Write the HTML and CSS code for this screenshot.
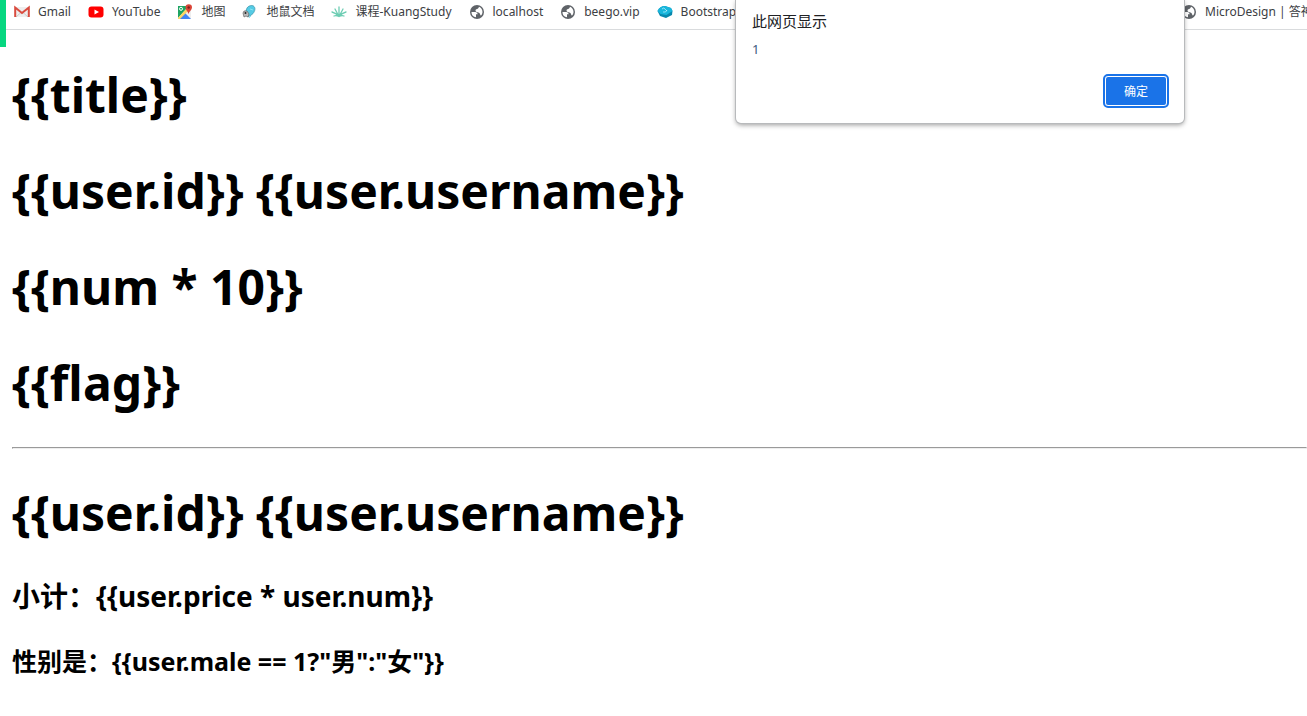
FILE: index.html
```html
<!DOCTYPE html>
<html lang="zh-CN">
<head>
<meta charset="utf-8">
<title>Vue</title>
<link rel="stylesheet" href="styles.css">
</head>
<body>
<svg class="defs" aria-hidden="true">
  <symbol id="globe" viewBox="0 0 16 16">
    <circle cx="8" cy="8" r="7" fill="#5f6368"/>
    <path d="M2.500 8H6.500Q8.700 8.300 8.700 10.200H7V13.300C4.500 13 2.400 11 2.500 8ZM10 2.800C12 3.500 13.500 5.500 13.500 8 13.500 9 13 10.500 12 11.500 11 11.500 11.500 9.500 10 8.700 8.500 8.200 6.500 8 6.500 6.500 6.500 5 9.500 5.500 10 2.800Z" fill="#fff"/>
  </symbol>
</svg>
<div class="page">
  <div class="accent"></div>
  <nav class="bookmarks">
    <a href="#"><svg class="icon" viewBox="0 0 16 16"><path d="M1 3h14v10H1z" fill="#eee"/><path d="M2 13 7 8.500M14 13 9 8.500" stroke="#ccc"/><path d="M1.200 13V3.500L8 9l6.800-5.500V13" fill="none" stroke="#d94b3f" stroke-width="2"/></svg><span>Gmail</span></a>
    <a href="#"><svg class="icon" viewBox="0 0 16 16"><rect x=".5" y="2.500" width="15" height="11" rx="3" fill="#f00"/><path d="M6.500 5.500v5L11 8z" fill="#fff"/></svg><span>YouTube</span></a>
    <a href="#"><svg class="icon" viewBox="0 0 16 16"><path d="M1 2h13v13H1z" fill="#eee"/><path d="M1 2h11L1 14z" fill="#1fa463"/><path d="M2 15 8 9l6 6z" fill="#4285f4"/><path d="m1 14 8-9 2 2-8 8H1z" fill="#fdd663"/><circle cx="4" cy="4.800" r="1.500" fill="none" stroke="#fff"/><path d="M11.500 10C11 7.500 8.500 6 8.500 3.500a3 3 0 0 1 6.500 0C15 6 12 7.500 11.500 10z" fill="#db4437"/><circle cx="11.700" cy="3.500" r="1.200" fill="#7b231c"/></svg><span>地图</span></a>
    <a href="#"><svg class="icon" viewBox="0 0 16 16"><path d="M5 4C7 1 11 1 12 2.500c2 2 .500 6-2 8L6 13 3 9z" fill="#54cbe5" stroke="#3b93a8" stroke-width=".7"/><path d="M2 7l3 0 2 3-1 3-2-1-2 1-1-4z" fill="#bbb" stroke="#666" stroke-width=".7"/><circle cx="3.500" cy="9" r="1" fill="#222"/><path d="M9 12 7 14M8 5l3 1" stroke="#8ce4f4"/></svg><span>地鼠文档</span></a>
    <a href="#"><svg class="icon" viewBox="0 0 16 16"><path d="M8 12.500V3M8 12.500 4 5M8 12.500 12 5M8 12.500Q5 9 1 8M8 12.500Q11 9 15 8M8 12.500Q5 11 3 12M8 12.500Q11 11 13 12" fill="none" stroke="#6dcdb3" stroke-width="1.300" stroke-linecap="round"/></svg><span>课程-KuangStudy</span></a>
    <a href="#"><svg class="icon"><use href="#globe"/></svg><span>localhost</span></a>
    <a href="#"><svg class="icon"><use href="#globe"/></svg><span>beego.vip</span></a>
    <a href="#"><svg class="icon" viewBox="0 0 16 16"><path d="M.500 7Q3 2 8 2l6 2 1.500 3-.500 4-6 3-6-2z" fill="#0788ad"/><path d="M.500 7Q3 2 8 2l6 2 1.500 3-6 4-6-1z" fill="#18b6dc"/><path d="M5 5q2-2 3 0l2 2M6 8q3 1 4-2" fill="none" stroke="#c6f4ff" stroke-width=".7"/></svg><span>Bootstrap</span></a>
    <a href="#" class="last"><svg class="icon"><use href="#globe"/></svg><span>MicroDesign | 答神</span></a>
  </nav>
  <main class="content">
    <h1>{{title}}</h1>
    <h1>{{user.id}} {{user.username}}</h1>
    <h1>{{num * 10}}</h1>
    <h1>{{flag}}</h1>
    <hr>
    <h1>{{user.id}} {{user.username}}</h1>
    <h2>小计：{{user.price * user.num}}</h2>
    <h3>性别是：{{user.male == 1?"男":"女"}}</h3>
  </main>
  <div class="dialog" role="alertdialog" aria-labelledby="dialog-title" aria-describedby="dialog-message">
    <div class="dialog-title" id="dialog-title">此网页显示</div>
    <div class="dialog-message" id="dialog-message">1</div>
    <button class="confirm" type="button">确定</button>
  </div>
</div>
</body>
</html>
```
FILE: styles.css
```css
* {
  box-sizing: border-box;
}

body {
  margin: 0;
  background: #fff;
  color: #000;
  font-family: "Noto Sans", "Noto Sans CJK SC", sans-serif;
}

.defs {
  position: absolute;
  width: 0;
  height: 0;
}

.page {
  position: relative;
  min-height: 100vh;
  overflow: hidden;
}

.accent {
  position: absolute;
  top: 0;
  left: 0;
  width: 6px;
  height: 47px;
  background: #07d780;
}

.bookmarks {
  display: flex;
  gap: 17px;
  height: 30px;
  margin-left: 6px;
  padding: 3px 0 0 8px;
  border-bottom: 1px solid #d9dbdd;
}

.bookmarks a {
  display: flex;
  flex: none;
  gap: 8px;
  align-items: center;
  height: 17px;
  color: #3c4043;
  font-size: 12px;
  line-height: 17px;
  text-decoration: none;
  white-space: nowrap;
}

.bookmarks .last {
  width: 126px;
  margin-left: auto;
}

.icon {
  flex: none;
  width: 16px;
  height: 16px;
}

.content {
  padding: 1px 0 0 12px;
}

h1,
h2,
h3 {
  font-weight: 700;
  white-space: nowrap;
}

h1 {
  margin: 32px 0;
  font-size: 48px;
  line-height: 64px;
}

hr {
  margin: 0;
}

h2 {
  margin: 0 0 30px;
  font-size: 28px;
  line-height: 38px;
}

h3 {
  margin: 0;
  font-size: 25px;
  line-height: 32px;
}

.dialog {
  position: absolute;
  top: 0;
  right: 123px;
  display: flex;
  flex-direction: column;
  width: 448px;
  padding: 11px 17px 17px 16px;
  border-radius: 0 0 5px 5px;
  background: #fff;
  box-shadow: 0 0 0 1px #b8babc, 0 2px 5px rgba(0, 0, 0, 0.4);
}

.dialog-title {
  color: #202124;
  font-size: 15px;
  line-height: 20px;
}

.dialog-message {
  margin-top: 8px;
  color: #3c5a80;
  font-size: 13px;
  line-height: 20px;
}

.confirm {
  align-self: flex-end;
  width: 62px;
  height: 30px;
  margin-top: 17px;
  padding: 0;
  border: 1px solid #fff;
  border-radius: 3px;
  outline: 2px solid #1a73e8;
  background: #1a73e8;
  color: #fff;
  font-family: inherit;
  font-size: 12px;
}
```
